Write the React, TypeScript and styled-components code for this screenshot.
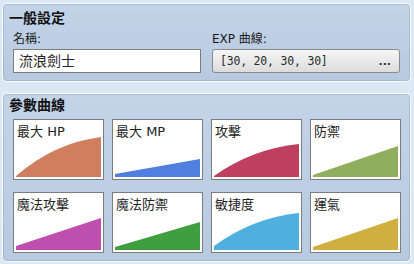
import React from "react";
import styled, { createGlobalStyle } from "styled-components";

const GlobalStyle = createGlobalStyle`
  html, body {
    margin: 0;
    padding: 0;
    background: #dde8f5;
  }
  body {
    font-family: "DejaVu Sans", "Noto Sans CJK TC", sans-serif;
    color: #1a1a1a;
  }
`;

interface Stat {
  label: string;
  color: string;
  start: number;
  end: number;
  curved?: boolean;
}

const stats: Stat[] = [
  { label: "最大 HP", color: "#cf7f5f", start: 1, end: 40, curved: true },
  { label: "最大 MP", color: "#4f7fdf", start: 3, end: 18 },
  { label: "攻擊", color: "#bf3f5f", start: 1, end: 33, curved: true },
  { label: "防禦", color: "#8faf5f", start: 2, end: 31 },
  { label: "魔法攻擊", color: "#bf4faf", start: 4, end: 32 },
  { label: "魔法防禦", color: "#3f9f3f", start: 3, end: 28 },
  { label: "敏捷度", color: "#4fafdf", start: 4, end: 37, curved: true },
  { label: "運氣", color: "#cfaf3f", start: 3, end: 32 }
];

const CHART_W = 85;
const CHART_H = 55;

const chartPath = (s: Stat) => {
  const b = CHART_H;
  const y0 = b - s.start;
  const y1 = b - s.end;
  if (s.curved) {
    const cy = b - (s.start + (s.end - s.start) * 0.85);
    return `M0,${b} L0,${y0} Q${CHART_W * 0.45},${cy} ${CHART_W},${y1} L${CHART_W},${b} Z`;
  }
  return `M0,${b} L0,${y0} L${CHART_W},${y1} L${CHART_W},${b} Z`;
};

const App: React.FC = () => {
  return (
    <Page>
      <GlobalStyle />
      <Panel>
        <PanelTitle $top={4}>一般設定</PanelTitle>
        <FieldRow>
          <Field>
            <FieldLabel>名稱:</FieldLabel>
            <TextInput>流浪劍士</TextInput>
          </Field>
          <Field>
            <FieldLabel>EXP 曲線:</FieldLabel>
            <PickerButton>
              <MonoText>[30, 20, 30, 30]</MonoText>
              <Ellipsis>...</Ellipsis>
            </PickerButton>
          </Field>
        </FieldRow>
      </Panel>
      <Panel>
        <PanelTitle $top={1}>參數曲線</PanelTitle>
        <CurveGrid>
          {stats.map((s) => (
            <CurveCard key={s.label}>
              <CurveChart viewBox={`0 0 ${CHART_W} ${CHART_H}`} preserveAspectRatio="none">
                <path d={chartPath(s)} fill={s.color} />
              </CurveChart>
              <CurveLabel>{s.label}</CurveLabel>
            </CurveCard>
          ))}
        </CurveGrid>
      </Panel>
    </Page>
  );
};

const Page = styled.div`
  display: flex;
  flex-direction: column;
  gap: 11px;
  padding: 3px 3px 2px 2px;
  width: 414px;
  height: 264px;
  box-sizing: border-box;
`;

const Panel = styled.section`
  border: 1px solid rgba(255, 255, 255, 0.9);
  box-shadow: inset 0 0 0 1px rgba(125, 150, 180, 0.35);
  border-radius: 5px;
  background: linear-gradient(#c3d4e9, #b8cae0);
  padding: 0 9px 8px 10px;
`;

const PanelTitle = styled.h2<{ $top: number }>`
  margin: ${(p) => p.$top}px 0 0 -4px;
  font-size: 14px;
  font-weight: 700;
  line-height: 20px;
  color: #111;
`;

const FieldRow = styled.div`
  display: grid;
  grid-template-columns: 188px 188px;
  gap: 11px;
  margin-top: 3px;
`;

const Field = styled.div`
  display: flex;
  flex-direction: column;
  gap: 2px;
`;

const FieldLabel = styled.label`
  font-size: 12px;
  line-height: 16px;
  color: #1a1a1a;
`;

const TextInput = styled.div`
  height: 24px;
  box-sizing: border-box;
  border: 1px solid #7c7c7c;
  background: #fff;
  padding: 0 5px;
  font-size: 14px;
  line-height: 22px;
  color: #222;
`;

const PickerButton = styled.div`
  height: 24px;
  box-sizing: border-box;
  border: 1px solid #8a8a8a;
  border-radius: 3px;
  background: linear-gradient(#f6f6f6, #dcdcdc);
  display: flex;
  align-items: center;
  justify-content: space-between;
  padding: 0 8px 0 7px;
`;

const MonoText = styled.span`
  font-family: "DejaVu Sans Mono", monospace;
  font-size: 11.5px;
  letter-spacing: -0.2px;
  color: #2a2a2a;
`;

const Ellipsis = styled.span`
  font-size: 11px;
  color: #333;
  font-weight: 700;
`;

const CurveGrid = styled.div`
  display: grid;
  grid-template-columns: repeat(4, 91px);
  grid-auto-rows: 61px;
  column-gap: 8px;
  row-gap: 12px;
  margin-top: 4px;
`;

const CurveCard = styled.div`
  display: grid;
  box-sizing: border-box;
  border: 1px solid #7c7c7c;
  background: #fff;
  padding: 2px;
`;

const CurveChart = styled.svg`
  grid-area: 1 / 1;
  width: 100%;
  height: 100%;
  display: block;
`;

const CurveLabel = styled.span`
  grid-area: 1 / 1;
  align-self: start;
  padding: 2px 0 0 1px;
  font-size: 13px;
  line-height: 16px;
  color: #222;
  position: relative;
`;

export default App;
